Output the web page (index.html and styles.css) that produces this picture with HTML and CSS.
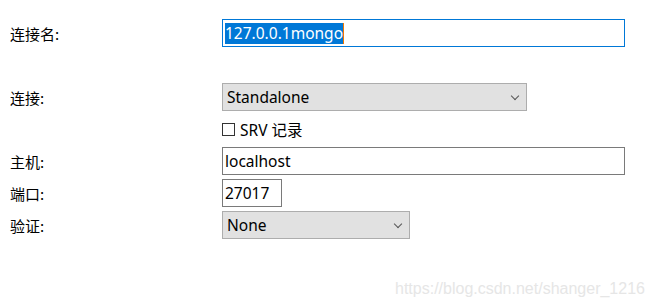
FILE: index.html
```html
<!DOCTYPE html>
<html>
<head>
    <title>连接设置</title>
    <link rel="stylesheet" href="styles.css">
</head>
<body>

    <div class="form">
        <div class="label">连接名:</div>
        <div class="field text focus"><span class="selected">127.0.0.1mongo</span><span class="caret"></span></div>

        <div class="label row-gap">连接:</div>
        <div class="field select wide row-gap">Standalone<span class="chevron"></span></div>

        <div class="label"></div>
        <div class="check-row"><span class="checkbox"></span>SRV 记录</div>

        <div class="label">主机:</div>
        <div class="field text">localhost</div>

        <div class="label">端口:</div>
        <div class="field text port">27017</div>

        <div class="label">验证:</div>
        <div class="field select narrow">None<span class="chevron"></span></div>
    </div>

    <div class="watermark">https://blog.csdn.net/shanger_1216</div>

</body>
</html>
```

FILE: styles.css
```css
body {
    margin: 0;
    background: white;
    font-family: "Noto Sans", "Noto Sans CJK SC", sans-serif;
    color: #000;
    width: 654px;
    height: 308px;
    position: relative;
    overflow: hidden;
}

.form {
    display: grid;
    grid-template-columns: 212px 403px;
    row-gap: 4px;
    padding: 19px 0 0 10px;
}

.label {
    height: 28px;
    display: flex;
    align-items: center;
    font-family: "Noto Sans CJK SC", sans-serif;
    font-size: 15px;
}

.row-gap {
    margin-top: 32px;
}

.field {
    box-sizing: border-box;
    height: 28px;
    border: 1px solid #7a7a7a;
    display: flex;
    align-items: center;
    font-size: 15.5px;
    padding-left: 2px;
    position: relative;
}

.focus {
    border-color: #0078d7;
}

.selected {
    background: #0078d7;
    color: #fff;
    height: 21px;
    line-height: 21px;
}

.caret {
    display: inline-block;
    width: 1px;
    height: 21px;
    background: #f07800;
}

.select {
    background: #e1e1e1;
    border-color: #adadad;
    padding-left: 4px;
}

.wide { width: 305px; }
.narrow { width: 188px; }
.port { width: 60px; }

.chevron {
    position: absolute;
    right: 8px;
    top: 9px;
    width: 5px;
    height: 5px;
    border-right: 1px solid #555;
    border-bottom: 1px solid #555;
    transform: rotate(45deg);
}

.check-row {
    height: 28px;
    display: flex;
    align-items: center;
    font-size: 15.5px;
    font-family: "Noto Sans", "Noto Sans CJK SC", sans-serif;
}

.checkbox {
    box-sizing: border-box;
    width: 13px;
    height: 13px;
    border: 1px solid #333;
    margin-right: 5px;
}

.watermark {
    position: absolute;
    left: 395px;
    top: 280px;
    font-family: "Liberation Sans", sans-serif;
    font-size: 16px;
    color: #e6e6e6;
}
```
